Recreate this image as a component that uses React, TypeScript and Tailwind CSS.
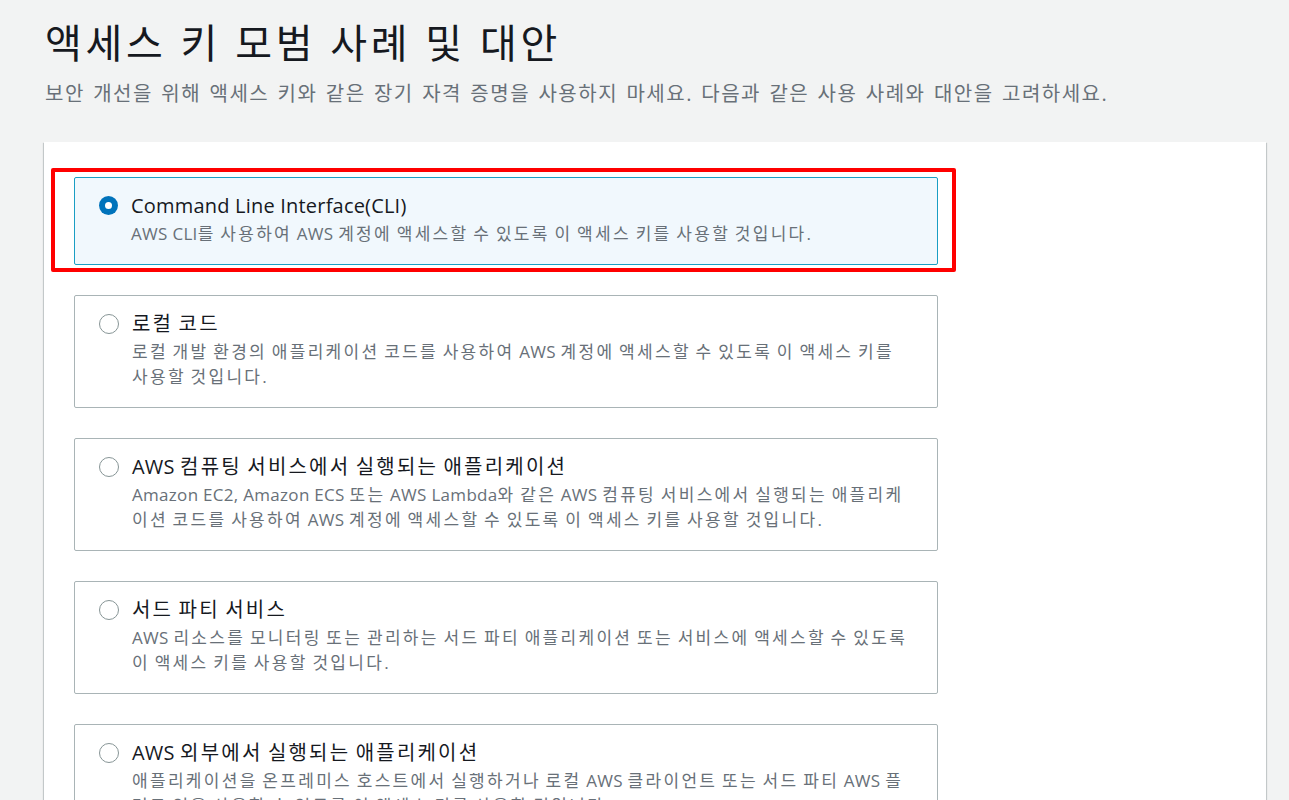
import React from 'react';

// Access key use case options
interface UseCase {
  id: string;
  title: string;
  description: string;
}

const useCases: UseCase[] = [
  {
    id: 'cli',
    title: 'Command Line Interface(CLI)',
    description: 'AWS CLI를 사용하여 AWS 계정에 액세스할 수 있도록 이 액세스 키를 사용할 것입니다.',
  },
  {
    id: 'local',
    title: '로컬 코드',
    description: '로컬 개발 환경의 애플리케이션 코드를 사용하여 AWS 계정에 액세스할 수 있도록 이 액세스 키를 사용할 것입니다.',
  },
  {
    id: 'compute',
    title: 'AWS 컴퓨팅 서비스에서 실행되는 애플리케이션',
    description:
      'Amazon EC2, Amazon ECS 또는 AWS Lambda와 같은 AWS 컴퓨팅 서비스에서 실행되는 애플리케이션 코드를 사용하여 AWS 계정에 액세스할 수 있도록 이 액세스 키를 사용할 것입니다.',
  },
  {
    id: 'third-party',
    title: '서드 파티 서비스',
    description:
      'AWS 리소스를 모니터링 또는 관리하는 서드 파티 애플리케이션 또는 서비스에 액세스할 수 있도록 이 액세스 키를 사용할 것입니다.',
  },
  {
    id: 'outside',
    title: 'AWS 외부에서 실행되는 애플리케이션',
    description:
      '애플리케이션을 온프레미스 호스트에서 실행하거나 로컬 AWS 클라이언트 또는 서드 파티 AWS 플러그 인을 사용할 수 있도록 이 액세스 키를 사용할 것입니다.',
  },
];

// Hangul runs are set a little wider than the Latin text around them
function Mixed({ text, hangulClass }: { text: string; hangulClass: string }) {
  const parts = text.split(/([\uAC00-\uD7A3]+)/);
  return (
    <>
      {parts.map((part, i) =>
        /[\uAC00-\uD7A3]/.test(part) ? (
          <span key={i} className={hangulClass}>
            {part}
          </span>
        ) : (
          <React.Fragment key={i}>{part}</React.Fragment>
        )
      )}
    </>
  );
}

function Radio({ checked }: { checked: boolean }) {
  if (checked) {
    return (
      <span className="flex h-[19px] w-[19px] items-center justify-center rounded-full bg-[#0073bb]">
        <span className="block h-[7px] w-[7px] rounded-full bg-white" />
      </span>
    );
  }
  return <span className="block h-[20px] w-[20px] rounded-full border-[1.5px] border-[#879596] bg-white" />;
}

export default function App() {
  const selected = 'cli';

  return (
    <div
      className="min-h-screen overflow-hidden bg-[#f2f3f3] pl-[44px] pr-[23px] pt-[14px]"
      style={{ fontFamily: '"Open Sans", "Noto Sans CJK KR", sans-serif' }}
    >
      {/* Header */}
      <h1 className="pl-px text-[40px] leading-[58px] font-normal tracking-[3.7px] text-[#16191f]">
        액세스 키 모범 사례 및 대안
      </h1>
      <p className="mt-[8px] pl-px text-[20px] leading-[28px] tracking-[1.5px] [word-spacing:1.7px] text-[#687078]">
        보안 개선을 위해 액세스 키와 같은 장기 자격 증명을 사용하지 마세요. 다음과 같은 사용 사례와 대안을 고려하세요.
      </p>

      {/* Options panel */}
      <div className="mt-[34px] bg-white pl-[30px] pt-[35px] pb-10 shadow-[0_1px_1px_0_rgba(0,28,36,0.3),1px_1px_1px_0_rgba(0,28,36,0.15),-1px_1px_1px_0_rgba(0,28,36,0.15)]">
        <div className="flex w-[864px] flex-col gap-[30px]">
          {useCases.map((item) => {
            const isSelected = item.id === selected;
            return (
              <div key={item.id} className="relative">
                <label
                  className={`flex cursor-pointer gap-[13px] rounded-[2px] border pl-[24px] pr-[26px] pt-[14px] pb-[18px] ${
                    isSelected ? 'border-[#1a9ec4] bg-[#f1f8fd]' : 'border-[#a9b4b6] bg-white'
                  }`}
                >
                  <span className="shrink-0 pt-[4px]">
                    <Radio checked={isSelected} />
                  </span>
                  <span className="flex flex-col">
                    <span className="text-[20px] leading-[28px] tracking-[0.2px] text-[#16191f]">
                      <Mixed text={item.title} hangulClass="tracking-[2.2px]" />
                    </span>
                    <span className="mt-[1px] text-[17px] leading-[25px] tracking-[0.3px] text-[#687078]">
                      <Mixed text={item.description} hangulClass="tracking-[2.3px]" />
                    </span>
                  </span>
                </label>
                {isSelected && (
                  <div className="pointer-events-none absolute -top-[9px] -left-[23px] -right-[18px] -bottom-[7px] rounded-[2px] border-[4px] border-[#ff0000]" />
                )}
              </div>
            );
          })}
        </div>
      </div>
    </div>
  );
}
